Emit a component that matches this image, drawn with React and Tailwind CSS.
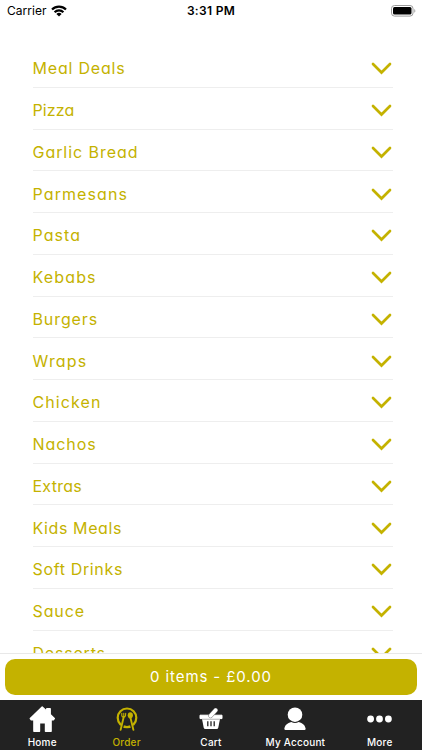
import React from 'react';

const categories = [
    { name: 'Meal Deals', tracking: 'tracking-[0.8px]' },
    { name: 'Pizza', tracking: 'tracking-[0.1px]' },
    { name: 'Garlic Bread', tracking: 'tracking-[0.95px]' },
    { name: 'Parmesans', tracking: 'tracking-[1.1px]' },
    { name: 'Pasta', tracking: 'tracking-[1.05px]' },
    { name: 'Kebabs', tracking: 'tracking-[1.15px]' },
    { name: 'Burgers', tracking: 'tracking-[0.9px]' },
    { name: 'Wraps', tracking: 'tracking-[1.15px]' },
    { name: 'Chicken', tracking: 'tracking-[1.1px]' },
    { name: 'Nachos', tracking: 'tracking-[0.95px]' },
    { name: 'Extras', tracking: 'tracking-[0.25px]' },
    { name: 'Kids Meals', tracking: 'tracking-[0.6px]' },
    { name: 'Soft Drinks', tracking: 'tracking-[0.65px]' },
    { name: 'Sauce', tracking: 'tracking-[0.9px]' },
    { name: 'Desserts', tracking: 'tracking-[0.8px]' },
];

const WifiIcon = () => (
    <svg width="16" height="12" viewBox="0 0 16 12" fill="none" stroke="#000" strokeWidth="2.2">
        <path d="M1 4.5a10 10 0 0 1 14 0" />
        <path d="M3.6 7.2a6.2 6.2 0 0 1 8.8 0" />
        <path d="M8 11.6 5.4 9a3.7 3.7 0 0 1 5.2 0Z" fill="#000" stroke="none" />
    </svg>
);

const BatteryIcon = () => (
    <svg width="26" height="12" viewBox="0 0 26 12">
        <rect x="0.5" y="0.5" width="21.5" height="10.6" rx="3" fill="#fff" stroke="#9b9b9b" />
        <rect x="2" y="2" width="18.5" height="7.6" rx="1.5" />
        <path d="M23.3 4v3.8c1.4-.6 1.4-3.2 0-3.8Z" fill="#9b9b9b" />
    </svg>
);

const Chevron = () => (
    <svg className="mt-px" width="21" height="13" viewBox="0 0 21 13" fill="none" stroke="#c4b200" strokeWidth="2.7" strokeLinecap="round">
        <path d="m2 2 8.5 8.5L19 2" />
    </svg>
);

const HomeIcon = () => (
    <svg width="26" height="26" viewBox="0 0 26 26" fill="#fff" stroke="#fff" strokeWidth="1.4" strokeLinejoin="round">
        <path d="M13.2 1 17.8 5.2V2.8h3.4v5.6l4.1 4.1-1 1.4h-2.2v11.3h-5.6v-8.4h-6v8.4H4.9V13.9H2.3l-1-1.4Z" />
    </svg>
);

const OrderIcon = () => (
    <svg width="24" height="26" viewBox="0 0 24 26" fill="none" stroke="#c4b200" strokeLinecap="round">
        <circle cx="12" cy="11.8" r="9.3" strokeWidth="2.2" />
        <path d="M8.6 15 6 24M15.4 15l2.6 9" stroke="#222" strokeWidth="3" strokeLinecap="butt" />
        <path d="M6.8 7.4v2.2c.1 2 3.4 2 3.7 0l.2-2.2M8.8 7.2v4" strokeWidth="1.1" />
        <path d="M8.6 11.5 5.6 23.9M15.4 11.5l3 12.4" strokeWidth="1.9" />
        <ellipse cx="15.3" cy="9.3" rx="2.6" ry="3.1" fill="#c4b200" stroke="none" />
    </svg>
);

const CartIcon = () => (
    <svg width="24" height="22" viewBox="0 0 24 22">
        <path d="M1 7.2h22v3.4H1Z" fill="#fff" stroke="#fff" strokeLinejoin="round" />
        <path d="M3 11h18l-1.7 8.6q-.3 1.5-1.7 1.5H6.4q-1.4 0-1.7-1.5Z" fill="#fff" />
        <path d="M3 11.3h18" stroke="#999" strokeWidth=".7" />
        <path d="M8.8 13.3v5M12 13.3v5M15.2 13.3v5" stroke="#222" strokeWidth="1.3" />
        <path d="m11.6 7.8 5-5.6" stroke="#777" strokeWidth="4.6" strokeLinecap="round" />
        <path d="m11.6 7.8 5-5.6" stroke="#fff" strokeWidth="3.6" strokeLinecap="round" />
    </svg>
);

const AccountIcon = () => (
    <svg width="22" height="24" viewBox="0 0 22 24" fill="#fff">
        <circle cx="11" cy="7.7" r="7.3" />
        <path d="M.3 22.1c.5-4 3.1-6.1 7-7.1q3.7 2 7.4 0c3.9 1 6.5 3.1 7 7.1q0 .8-1 .8H1.3q-1 0-1-.8Z" />
    </svg>
);

const MoreIcon = () => (
    <svg width="26" height="8" viewBox="0 0 26 8" fill="#fff">
        <circle cx="3.6" cy="4" r="3.4" />
        <circle cx="12.5" cy="4" r="3.4" />
        <circle cx="21.4" cy="4" r="3.4" />
    </svg>
);

const tabs = [
    { label: 'Home', icon: <HomeIcon /> },
    { label: 'Order', icon: <OrderIcon />, active: true },
    { label: 'Cart', icon: <CartIcon /> },
    { label: 'My Account', icon: <AccountIcon /> },
    { label: 'More', icon: <MoreIcon /> },
];

const StatusBar = () => (
    <header className="grid h-[22px] shrink-0 grid-cols-3 items-center pl-[7px] pr-[5px] text-black">
        <div className="flex items-center gap-[4px] text-[12px] tracking-[0.05px]">
            Carrier
            <WifiIcon />
        </div>
        <div className="pr-[2px] text-center text-[12px] font-semibold tracking-[0.3px]">3:31 PM</div>
        <div className="flex justify-end">
            <BatteryIcon />
        </div>
    </header>
);

const CategoryRow = ({ name, tracking }) => (
    <li className="flex h-[41.75px] shrink-0 items-center justify-between border-b border-[#eeeeee] pt-1 pr-px text-[#c4b200]">
        <span className={`-ml-[0.5px] text-[16px] leading-6 ${tracking}`}>{name}</span>
        <Chevron />
    </li>
);

export default function App() {
    return (
        <div className="flex h-[750px] w-[422px] flex-col overflow-hidden bg-white font-['Inter',sans-serif]">
            <StatusBar />
            <main className="min-h-0 flex-1 overflow-hidden pt-[24px] pr-[29px] pl-[33px]">
                <ul className="flex flex-col [font-feature-settings:'cv11']">
                    {categories.map((category) => (
                        <CategoryRow key={category.name} {...category} />
                    ))}
                </ul>
            </main>
            <div className="h-[47px] shrink-0 border-t border-[#e8e8e8] px-[5px] pt-[5px]">
                <button className="flex h-[36px] w-full items-center justify-center rounded-[10px] bg-[#c4b200] text-[15px] tracking-[0.9px] text-white">
                    0 items - £0.00
                </button>
            </div>
            <nav className="grid h-[50px] shrink-0 grid-cols-5 bg-[#222222]">
                {tabs.map(({ label, icon, active }) => (
                    <div key={label} className={`flex flex-col items-center ${active ? 'text-[#c4b200]' : 'text-white'}`}>
                        <div className="flex h-[35px] items-center pt-[3px]">{icon}</div>
                        <span className="text-[10px] leading-[14px] font-medium tracking-[0.2px] whitespace-nowrap">{label}</span>
                    </div>
                ))}
            </nav>
        </div>
    );
}
